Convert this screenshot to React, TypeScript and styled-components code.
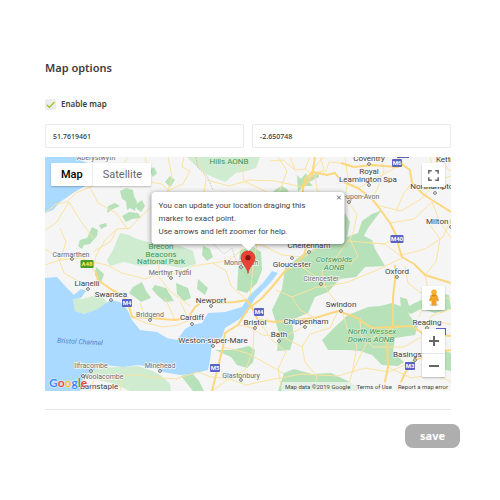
import React, { useState } from "react";
import styled, { createGlobalStyle } from "styled-components";

const GlobalStyle = createGlobalStyle`
  * { box-sizing: border-box; }
  body { margin: 0; background: #fff; color: #3c3c3c; font-family: "Noto Sans", "Open Sans", sans-serif; }
  button, input { font-family: inherit; }
`;

const Page = styled.main`
  display: flex;
  flex-direction: column;
  padding: 60px 40px 40px 45px;
`;
const Section = styled.section`
  display: flex;
  flex-direction: column;
  margin-right: 9px;
  padding-bottom: 18px;
  border-bottom: 1px solid #e6e6e6;
`;
const Title = styled.h1`
  margin: 0 0 22px;
  font-size: 11px;
  line-height: 16px;
  font-weight: 600;
`;
const CheckRow = styled.label`
  display: flex;
  align-items: flex-start;
  gap: 5px;
  margin-bottom: 14px;
  font-size: 8px;
  line-height: 12px;
  font-weight: 600;
`;
const CheckBox = styled.span`
  display: grid;
  width: 11px;
  height: 11px;
  margin-top: 1px;
  > * { grid-area: 1 / 1; }
  svg { pointer-events: none; width: 11px; height: 11px; }
  input:not(:checked) + svg { visibility: hidden; }
`;
const CheckInput = styled.input`
  appearance: none;
  margin: 0;
  width: 11px;
  height: 11px;
  border-radius: 2px;
  background: #ececec;
`;
const Fields = styled.div`
  display: grid;
  grid-template-columns: 1fr 1fr;
  gap: 8px;
  margin-bottom: 9px;
`;
const Field = styled.input`
  width: 100%;
  min-width: 0;
  height: 24px;
  padding: 0 7px;
  border: 1px solid #e9e9e9;
  border-radius: 2px;
  background: #fff;
  color: #333;
  font-size: 7px;
  font-weight: 500;
`;
const MapFrame = styled.div`
  position: relative;
  height: 234px;
  overflow: hidden;
  font-family: Roboto, sans-serif;
`;
const MapArt = styled.svg`
  display: block;
  width: 100%;
  height: 100%;
`;
const MapTypes = styled.div`
  position: absolute;
  top: 6px;
  left: 6px;
  display: flex;
  height: 23px;
  background: #fff;
  border-radius: 1px;
  box-shadow: 0 1px 2px rgba(0, 0, 0, 0.25);
`;
const TypeButton = styled.button<{ $active?: boolean }>`
  border: 0;
  padding: 0 9px 0 10px;
  background: transparent;
  color: ${(p) => (p.$active ? "#000" : "#666")};
  font-size: 11px;
  line-height: 23px;
  font-weight: ${(p) => (p.$active ? 500 : 400)};
  & + & { border-left: 1px solid #eee; }
`;
const RightControls = styled.div`
  position: absolute;
  top: 6px;
  right: 6px;
  bottom: 14px;
  display: flex;
  flex-direction: column;
  width: 23px;
`;
const ControlGroup = styled.div<{ $push?: boolean }>`
  display: flex;
  flex-direction: column;
  margin-top: ${(p) => (p.$push ? "auto" : "0")};
  margin-bottom: ${(p) => (p.$push ? "19px" : "0")};
  background: #fff;
  border-radius: 1px;
  box-shadow: 0 1px 2px rgba(0, 0, 0, 0.25);
`;
const ControlButton = styled.button`
  display: flex;
  align-items: center;
  justify-content: center;
  height: 24px;
  padding: 0;
  border: 0;
  background: transparent;
  & + & { border-top: 1px solid #e9e9e9; }
`;
const InfoWindow = styled.div`
  position: absolute;
  left: 50%;
  top: 35px;
  width: 193px;
  padding: 7px 7px 6px;
  transform: translateX(-50%);
  border-radius: 4px;
  background: #fff;
  box-shadow: 0 1px 5px rgba(0, 0, 0, 0.45);
  color: #444;
  font-size: 8px;
  line-height: 13px;
  p { margin: 0; }
  &::after {
    content: "";
    position: absolute;
    left: 50%;
    top: 100%;
    transform: translateX(-50%);
    border: 7px solid transparent;
    border-top-color: #fff;
    border-bottom: 0;
  }
`;
const CloseButton = styled.button`
  position: absolute;
  top: 3px;
  right: 3px;
  display: flex;
  padding: 0;
  border: 0;
  background: transparent;
`;
const Marker = styled.svg`
  position: absolute;
  left: 50%;
  bottom: 50%;
  width: 16px;
  height: 24px;
  transform: translateX(-50%);
`;
const Logo = styled.a`
  position: absolute;
  left: 4px;
  bottom: 0;
  font-family: Lato, sans-serif;
  font-size: 12px;
  line-height: 16px;
  font-weight: 700;
  text-decoration: none;
  text-shadow: 0 0 1px #fff, 0 0 2px #fff;
`;
const Letter = styled.span<{ $color: string }>`
  color: ${(p) => p.$color};
`;
const Credits = styled.div`
  position: absolute;
  right: 0;
  bottom: 0;
  display: flex;
  gap: 6px;
  padding: 0 3px;
  background: rgba(245, 245, 245, 0.75);
  color: #444;
  font-size: 6px;
  line-height: 9px;
  a { color: inherit; text-decoration: none; }
`;
const Actions = styled.div`
  display: flex;
  justify-content: flex-end;
  padding-top: 14px;
`;
const SaveButton = styled.button`
  width: 55px;
  height: 24px;
  padding: 0 0 1px;
  border: 0;
  border-radius: 8px;
  background: #aeaeae;
  color: #fff;
  font-size: 11px;
  font-weight: 700;
`;

const lightParks = [
  "M120 233 129 235 137 239 152 243 180 246 193 251 196 264 182 268 160 264 140 266 124 262 110 266 107 260 113 250Z",
  "M187 157H260L256 168 243 172 236 173 225 182 208 175 198 168Z",
  "M85 377 93 368 123 367 138 366 153 371 163 377 170 384 171 391H130L112 383 98 380Z",
  "M73 298 82 299 100 294 107 302 98 309 84 314 75 311Z",
];
const parks = [
  "M120 191 126 188 133 190 134 196 137 202 135 211 130 208 127 210 126 201 122 199Z",
  "M108 206 115 203 120 206 113 209 107 213Z",
  "M122 216 129 212 138 213 141 218 132 219 126 222Z",
  "M135 205 142 200 145 206 141 212 137 209Z",
  "M128 172 135 169 136 173 132 175Z",
  "M80 240 87 238 92 227 98 230 97 236 90 244 84 245 82 249 78 246Z",
  "M99 225 106 223 107 226 101 229Z",
  "M149 170 154 167 157 173 153 177Z",
  "M165 182 170 176 175 180 170 187Z",
  "M96 267 104 274 101 283 95 275Z",
  "M133 287 142 282 146 291 151 298 141 302 136 298 129 293Z",
  "M155 285 166 288 174 301 165 302 157 295 152 289Z",
  "M176 283 188 288 191 298 184 301 177 294Z",
  "M198 279 208 288 205 295 197 289Z",
  "M203 246 210 249 213 257 207 261 202 255Z",
  "M240 250 252 246 261 252 262 270 257 283 247 293 237 290 238 273Z",
  "M276 189 282 186 287 189 290 194H271Z",
  "M297 175 301 179 306 173 308 178 318 172 319 177 309 182 313 186 303 186 298 192Z",
  "M345 213 350 222 347 237 358 233 362 221 372 214 382 210 377 216 368 228 364 236 372 240 375 249 385 266 365 267 356 277 340 279 328 292 315 297 308 313 292 320 294 337 290 350 277 351 279 333 272 310 282 289 285 268 302 255 323 244 337 238Z",
  "M322 340 335 327 348 315 368 307 380 306 392 303 405 308 412 319 419 322 415 335 395 338 393 352 404 362 398 366 382 365 372 355 360 351 348 350 328 350Z",
  "M400 297 407 299 409 306 421 300 431 302 438 293 449 295 451 309 435 313 421 309 411 314 401 309Z",
  "M215 350 232 350 249 346 255 350 253 362 247 368 237 365 231 357Z",
  "M181 376 192 373 199 381 204 391 193 391Z",
  "M278 391 284 373 294 369 312 374 331 373 352 383 364 391Z",
  "M434 357 441 350 451 353V371L440 369Z",
];
const majorRoads = [
  "M95 270 98 280 112 290 122 295 128 303 132 317 150 318 175 320 188 318 195 307 205 300 218 303 235 302 247 300 253 310 258 320 275 322 315 318 338 311 355 317 372 328 392 327 412 326 422 333 451 336",
  "M212 391 218 367 223 347 225 333 238 325 248 309 262 298 272 287 285 271 290 268 303 257 308 243 303 215 303 187 312 176 315 157",
  "M303 187 305 179 313 172 327 175 335 173 341 181 358 188 371 198 377 205 390 223 397 237 399 248 402 257 414 264 425 275 451 283",
  "M341 163 354 167 372 165 397 167 403 165 410 170 412 183 423 194 432 200 451 212M403 165 398 157",
  "M395 265 395 280 393 297 393 327 387 340 388 367 383 391",
  "M397 391 405 373 415 360 432 353 451 350",
];
const minorRoads = [
  "M45 213 56 204 67 202 76 193 90 187 105 180 121 167 128 157",
  "M45 265 60 260 80 258 93 262 107 265 122 273 145 279 161 273 176 274 193 266 213 263 226 271 231 286 247 300",
  "M93 270 96 256 105 240 117 229 130 228 137 220 150 208 166 196 172 177 168 157",
  "M45 249 58 257 64 273 78 281 95 287M69 202 80 220 93 238M60 260 66 242 60 228",
  "M117 229 111 241 93 252",
  "M145 157 148 167 141 170 144 181 162 184 170 192",
  "M184 157 182 167 190 171 183 184 169 190",
  "M197 157 206 178 203 202 188 221 172 244 160 258 158 276 170 291 190 306",
  "M241 157 244 181 269 193 292 201M207 180 229 186 250 180 275 181 303 187",
  "M310 157 305 169 311 173M270 161 283 160 295 170 305 169M290 157 295 170M324 157 317 164 311 173 326 171 329 162 341 163",
  "M278 157 287 171 280 190 268 216 257 243 253 267 250 296",
  "M303 257 282 255 262 245 248 244 230 260 213 263",
  "M320 157 324 169 315 176 317 190 332 203 335 227 320 246 304 257",
  "M345 157 348 179 345 198 357 214 353 234 338 255 322 271 325 287 342 310",
  "M296 263 315 276 325 287 348 282 377 270 402 258",
  "M347 241 362 242 384 244 397 237M350 239 358 256 350 265",
  "M376 205 401 211 421 199 437 181 451 176M357 189 376 178 397 167",
  "M390 223 414 219 432 202 440 222 451 238M402 255 425 249 443 237 451 219",
  "M402 257 385 244 370 243M425 275 436 262 440 239 427 221",
  "M412 183 404 193 396 211M380 157 384 170 377 190 371 198",
  "M405 266 408 283 421 293 436 292 451 300M425 275 429 293 419 317",
  "M342 310 347 328 357 346 352 373 347 391M393 327 368 340 352 373",
  "M315 318 298 330 283 337 263 335 247 326M283 337 302 347 305 362 317 377 313 391",
  "M258 320 272 340 286 352 278 369 282 391M223 347 247 353 269 365 284 374",
  "M212 391 230 378 245 370 253 351 254 328M238 325 254 328 268 319",
  "M176 379 198 372 211 377 230 379 246 385 269 380 302 374 338 376 365 368 389 372 415 360",
  "M132 317 146 323 163 327 178 325 190 320M140 303 145 316M165 298 175 320M180 301 188 318",
  "M93 375 105 380 123 376 137 375 163 378 177 379M123 376 120 391M96 376 89 391",
  "M338 311 330 328 310 334 302 347M360 318 361 335 373 347 404 347 421 337",
  "M276 290 292 297 300 310 315 318M292 297 317 287 325 287",
  "M45 230 56 223 69 202M90 187 98 203 116 213 128 230",
  "M430 157 434 174 426 190 412 183M440 157 448 169 451 171",
  "M422 333 431 316 451 309M422 333 437 322 451 324M388 367 411 378 435 374 451 382",
];

type Place = [name: string, x: number, y: number, big?: boolean, dot?: [number, number]];
const places: Place[] = [
  ["Aberystwyth", 96, 160],
  ["Coventry", 369, 161, true, [369, 164]],
  ["Royal", 369, 174, true],
  ["Leamington Spa", 368, 182, true, [369, 185]],
  ["Northampton", 434, 189, true, [435, 193]],
  ["Kettering", 452, 162, true],
  ["Stratford-upon-Avon", 348, 199, false, [349, 202]],
  ["Milton Keynes", 451, 224, true, [451, 227]],
  ["Carmarthen", 71, 257, false, [72, 259]],
  ["Merthyr Tydfil", 170, 275, false, [171, 278]],
  ["Monmouth", 241, 265, false, [241, 267]],
  ["Cheltenham", 309, 248, true, [309, 252]],
  ["Gloucester", 292, 267, true, [292, 258]],
  ["Cirencester", 321, 281, false, [321, 284]],
  ["Oxford", 397, 274, true, [397, 277]],
  ["Llanelli", 87, 286, true, [88, 289]],
  ["Swansea", 111, 297, true, [111, 300]],
  ["Bridgend", 150, 317, false, [150, 320]],
  ["Newport", 211, 303, true, [211, 306]],
  ["Cardiff", 192, 320, true, [192, 324]],
  ["Bristol", 255, 325, true, [255, 328]],
  ["Bath", 279, 337, true, [279, 341]],
  ["Chippenham", 306, 324, true, [305, 327]],
  ["Swindon", 341, 307, true, [341, 311]],
  ["Reading", 427, 325, true, [427, 328]],
  ["Weston-super-Mare", 213, 343, true, [213, 346]],
  ["Basingstoke", 415, 357, true, [415, 360]],
  ["Minehead", 160, 368, false, [160, 371]],
  ["Ilfracombe", 91, 368, false, [91, 371]],
  ["Woolacombe", 103, 379, false, [83, 376]],
  ["Barnstaple", 99, 389, true],
  ["Glastonbury", 241, 378, false, [241, 380]],
];
const parkNames: [string, number, number, boolean?][] = [
  ["Hills AONB", 229, 164],
  ["Brecon", 161, 249],
  ["Beacons", 161, 257],
  ["National Park", 161, 264],
  ["Cotswolds", 334, 262, true],
  ["AONB", 334, 270, true],
  ["North Wessex", 372, 334, true],
  ["Downs AONB", 371, 342, true],
];
const shields: [string, number, number, boolean?][] = [
  ["M6", 397, 163],
  ["M40", 397, 239],
  ["A48", 87, 264, true],
  ["M4", 127, 303],
  ["M4", 259, 312],
  ["M5", 215, 368],
  ["M3", 410, 366],
];

const Terrain = () => (
  <MapArt viewBox="45 157 406 234" preserveAspectRatio="xMidYMid slice" role="img" aria-label="Map of South Wales and South West England">
    <rect x="-500" y="-200" width="1500" height="900" fill="#f5f5f5" />
    {lightParks.map((d) => <path key={d} d={d} fill="#cfebd0" />)}
    {parks.map((d) => <path key={d} d={d} fill="#b7e1b9" />)}
    <g fill="#aadaff">
      <path d="M45 157H77L82 161 88 163 94 177 85 186 73 193 60 202 53 210 45 213Z" />
      <path d="M45 278 57 277 66 287 74 295 81 289 86 291 81 298 73 299 75 311 84 314 98 309 106 303 111 300 120 302 127 309 132 320 140 330 157 332 167 338 177 340 185 329 192 325 202 323 208 313 225 312 242 307 250 295 263 283 272 271 278 273 270 283 255 298 247 313 238 320 225 328 222 337 212 345 210 360 208 370 192 374 180 375 163 372 153 367 138 365 123 367 103 365 92 371 83 377 82 385 80 391H45Z" />
    </g>
    <g fill="none" stroke="#fbe3a2" strokeWidth="1" strokeLinejoin="round">
      {minorRoads.map((d) => <path key={d} d={d} />)}
    </g>
    <g fill="none" stroke="#fbd87e" strokeWidth="2" strokeLinejoin="round">
      {majorRoads.map((d) => <path key={d} d={d} />)}
    </g>
    <path d="M196 157 198 168 207 176 213 190M213 244 224 254 232 248 235 258 240 268 249 277 257 282" fill="none" stroke="#bbb" strokeDasharray="2 1" strokeWidth=".6" />
    <g fill="#5b62c4">
      <rect x="397" y="153" width="12" height="5" />
      <rect x="436" y="328" width="10" height="7" />
      <rect x="266" y="239" width="12" height="5" />
    </g>
    <g fontSize="7" textAnchor="middle" stroke="#f7f7f7" strokeWidth="1.5" strokeLinejoin="round" paintOrder="stroke">
      {parkNames.map(([name, x, y, italic]) => (
        <text key={name} x={x} y={y} fill="#3e9555" fontSize="8" fontStyle={italic ? "italic" : "normal"} stroke="#d3edd4">{name}</text>
      ))}
      <text x="80" y="344" fill="#4d86c6" stroke="#aadaff" fontStyle="italic" transform="rotate(3 80 342)">Bristol Channel</text>
      {places.map(([name, x, y, big]) => (
        <text key={name} x={x} y={y} fill={big ? "#424242" : "#6b6b6b"} fontSize={big ? 8 : 7}>{name}</text>
      ))}
    </g>
    <g fill="#fff" stroke="#555" strokeWidth=".8">
      {places.map(([name, , , , dot]) => dot && <circle key={name} cx={dot[0]} cy={dot[1]} r="1.4" />)}
    </g>
    {shields.map(([name, x, y, green]) => {
      const w = name.length > 2 ? 13 : 10;
      return (
        <g key={`${name}-${x}`}>
          <rect x={x - w / 2} y={y - 4} width={w} height="8" rx="1" fill={green ? "#4c9a2a" : "#5b62c4"} />
          <text x={x} y={y + 2} fill={green ? "#fff04a" : "#fff"} fontSize="6" fontWeight="700" textAnchor="middle">{name}</text>
        </g>
      );
    })}
  </MapArt>
);

const logoLetters: [string, string][] = [
  ["G", "#4285f4"], ["o", "#ea4335"], ["o", "#fbbc05"], ["g", "#4285f4"], ["l", "#34a853"], ["e", "#ea4335"],
];

export default function App() {
  const [enabled, setEnabled] = useState(true);
  const [lat, setLat] = useState("51.7619461");
  const [lng, setLng] = useState("-2.650748");
  const [satellite, setSatellite] = useState(false);

  return (
    <>
      <GlobalStyle />
      <Page>
        <Section>
          <Title>Map options</Title>
          <CheckRow>
            <CheckBox>
              <CheckInput type="checkbox" checked={enabled} onChange={(e) => setEnabled(e.target.checked)} />
              <svg viewBox="0 0 11 11" fill="none" stroke="#97bf0d" strokeWidth="1.2"><path d="M1.8 5.8 4.4 8.4 9.4 3.2" /></svg>
            </CheckBox>
            Enable map
          </CheckRow>
          <Fields>
            <Field aria-label="Latitude" value={lat} onChange={(e) => setLat(e.target.value)} />
            <Field aria-label="Longitude" value={lng} onChange={(e) => setLng(e.target.value)} />
          </Fields>
          <MapFrame>
            <Terrain />
            <Marker viewBox="0 0 16 24">
              <path d="M8 23.5C7.3 17 1 13.5 1 7.7A7 7 0 0 1 15 7.7C15 13.5 8.7 17 8 23.5Z" fill="#ea4335" stroke="#c5372c" strokeWidth=".6" />
              <circle cx="8" cy="7.7" r="2.6" fill="#811411" />
            </Marker>
            <InfoWindow>
              <p>You can update your location draging this<br />marker to exact point.<br />Use arrows and left zoomer for help.</p>
              <CloseButton aria-label="Close">
                <svg width="5" height="5" viewBox="0 0 5 5" stroke="#555" strokeWidth=".9"><path d="M.5.5l4 4M4.5.5l-4 4" /></svg>
              </CloseButton>
            </InfoWindow>
            <MapTypes>
              <TypeButton $active={!satellite} onClick={() => setSatellite(false)}>Map</TypeButton>
              <TypeButton $active={satellite} onClick={() => setSatellite(true)}>Satellite</TypeButton>
            </MapTypes>
            <RightControls>
              <ControlGroup>
                <ControlButton aria-label="Full screen">
                  <svg width="11" height="11" viewBox="0 0 11 11" fill="none" stroke="#666" strokeWidth="1.5"><path d="M.8 3.8V.8h3M7.2.8h3v3M10.2 7.2v3h-3M3.8 10.2h-3v-3" /></svg>
                </ControlButton>
              </ControlGroup>
              <ControlGroup $push>
                <ControlButton aria-label="Street View">
                  <svg width="12" height="18" viewBox="0 0 12 18">
                    <ellipse cx="6" cy="15.7" rx="4.5" ry="1.5" fill="#dedede" />
                    <path d="M3 6.2Q6 4.3 9 6.2L10.6 11.4 9.2 12 8.4 9.6 8 16.3H6.5L6 12 5.5 16.3H4L3.6 9.6 2.8 12 1.4 11.4Z" fill="#f6a91c" stroke="#d78a18" strokeWidth=".5" />
                    <circle cx="6" cy="3.2" r="2.5" fill="#fbb62d" stroke="#d78a18" strokeWidth=".4" />
                    <path d="M4.2 6.2Q6 8 7.8 6.2" fill="none" stroke="#c46f12" strokeWidth=".8" />
                  </svg>
                </ControlButton>
              </ControlGroup>
              <ControlGroup>
                <ControlButton aria-label="Zoom in">
                  <svg width="10" height="10" viewBox="0 0 10 10" stroke="#666" strokeWidth="2"><path d="M0 5h10M5 0v10" /></svg>
                </ControlButton>
                <ControlButton aria-label="Zoom out">
                  <svg width="10" height="10" viewBox="0 0 10 10" stroke="#666" strokeWidth="2"><path d="M0 5h10" /></svg>
                </ControlButton>
              </ControlGroup>
            </RightControls>
            <Logo href="#google" aria-label="Google">
              {logoLetters.map(([letter, color], i) => <Letter key={i} $color={color}>{letter}</Letter>)}
            </Logo>
            <Credits>
              <span>Map data ©2019 Google</span>
              <a href="#terms">Terms of Use</a>
              <a href="#report">Report a map error</a>
            </Credits>
          </MapFrame>
        </Section>
        <Actions>
          <SaveButton type="button">save</SaveButton>
        </Actions>
      </Page>
    </>
  );
}
